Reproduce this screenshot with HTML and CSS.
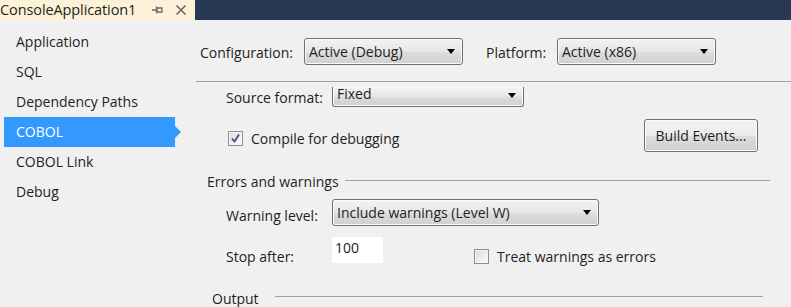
FILE: index.html
```html
<!DOCTYPE html>
<html>
<head>
<meta charset="utf-8">
<link rel="stylesheet" href="styles.css">
</head>
<body>
<div class="window">
  <div class="tabbar">
    <div class="tab">
      <span class="tab-title">ConsoleApplication1</span>
      <svg class="pin" width="11" height="10" viewBox="0 0 11 10"><path d="M0 5h4M4.5 1.5v7M5 3h5v4H5z" fill="none" stroke="#6a6a6a" stroke-width="1.3"/></svg>
      <svg class="close" width="12" height="12" viewBox="0 0 12 12"><path d="M1.5 1.5l9 9M10.5 1.5l-9 9" stroke="#6a6a6a" stroke-width="1.6"/></svg>
    </div>
    <div class="tabfill"></div>
  </div>
  <div class="main">
    <ul class="nav">
      <li>Application</li>
      <li>SQL</li>
      <li>Dependency Paths</li>
      <li class="active">COBOL</li>
      <li>COBOL Link</li>
      <li>Debug</li>
    </ul>
    <div class="content">
      <div class="configbar">
        <span class="lbl cfg-lbl">Configuration:</span>
        <div class="combo combo-cfg"><span>Active (Debug)</span><i class="arrow"></i></div>
        <span class="lbl plat-lbl">Platform:</span>
        <div class="combo combo-cfg"><span>Active (x86)</span><i class="arrow"></i></div>
      </div>
      <div class="scroll">
        <div class="row form-row src-row">
          <span class="lbl">Source format:</span>
          <div class="combo combo-src"><span>Fixed</span><i class="arrow"></i></div>
        </div>
        <div class="row check-row">
          <label class="check"><span class="box checked"><svg width="11" height="11" viewBox="0 0 11 11"><path d="M2 5.5l2.5 3L9 1.5" fill="none" stroke="#3b4f7a" stroke-width="1.8"/></svg></span>Compile for debugging</label>
          <button class="btn">Build Events...</button>
        </div>
        <div class="group group-errors"><span>Errors and warnings</span><hr></div>
        <div class="row form-row warn-row">
          <span class="lbl">Warning level:</span>
          <div class="combo combo-warn"><span>Include warnings (Level W)</span><i class="arrow"></i></div>
        </div>
        <div class="row form-row stop-row">
          <span class="lbl">Stop after:</span>
          <div class="textbox">100</div>
          <label class="check treat"><span class="box"></span>Treat warnings as errors</label>
        </div>
        <div class="group group-output"><span>Output</span><hr></div>
      </div>
    </div>
  </div>
</div>
</body>
</html>
```
FILE: styles.css
```css
* { box-sizing: border-box; }
html, body { margin: 0; padding: 0; }
body {
  width: 791px;
  height: 307px;
  overflow: hidden;
  background: #f0f0f0;
  font-family: "Open Sans", "Noto Sans", sans-serif;
  font-size: 14px;
  color: #1e1e1e;
}
.window { width: 791px; height: 307px; display: flex; flex-direction: column; }
.tabbar { display: flex; height: 20px; }
.tab {
  width: 195px;
  background: #fdf2d8;
  display: flex;
  align-items: center;
}
.tab-title { font-size: 14.5px; width: 152px; line-height: 20px; letter-spacing: -0.1px; }
.pin { margin-left: 0; }
.close { margin-left: 12px; }
.tabfill { flex: 1; background: #293955; }

.main { flex: 1; display: flex; }
.nav {
  list-style: none;
  margin: 0;
  padding: 7px 0 0 4px;
  width: 196px;
  flex: none;
}
.nav li {
  height: 30px;
  line-height: 30px;
  padding-left: 12px;
  width: 171px;
  position: relative;
}
.nav li.active { background: #3399ff; color: #fff; }
.nav li.active::after {
  content: "";
  position: absolute;
  right: -6px;
  top: 9px;
  border-left: 6px solid #3399ff;
  border-top: 6px solid transparent;
  border-bottom: 6px solid transparent;
}

.content { flex: 1; display: flex; flex-direction: column; }
.configbar {
  height: 62px;
  border-bottom: 1px solid #a0a0a0;
  display: flex;
  align-items: flex-start;
  padding: 18px 0 0 4px;
}
.configbar .lbl { line-height: 27px; padding-top: 1px; }
.cfg-lbl { width: 104px; }
.plat-lbl { width: 71px; margin-left: 23px; }

.combo {
  height: 27px;
  border: 1px solid #707070;
  border-radius: 3px;
  background: linear-gradient(#f3f3f3, #e6e6e6 50%, #dddddd 51%, #d0d0d0);
  display: flex;
  align-items: center;
  padding-left: 4px;
  padding-right: 7px;
  justify-content: space-between;
  box-shadow: inset 0 0 0 1px #fbfbfb;
}
.combo-cfg { width: 159px; }
.arrow {
  width: 0; height: 0;
  border-top: 5px solid #000;
  border-left: 4.5px solid transparent;
  border-right: 4.5px solid transparent;
}

.scroll { padding-left: 30px; position: relative; }
.row { display: flex; align-items: center; }
.form-row .lbl { width: 106px; flex: none; }
.src-row { margin-top: 5px; height: 20px; }
.combo-src {
  width: 192px;
  height: 20px;
  border-top: none;
  border-radius: 0 0 3px 3px;
  align-items: flex-start;
  line-height: 14px;
}
.combo-src .arrow { margin-top: 6px; }

.check-row { margin-top: 12px; height: 33px; }
.check { display: flex; align-items: center; }
.check-row .check { margin-left: 2px; margin-top: 5px; }
.box {
  width: 15px; height: 15px;
  border: 1px solid #8e8f8f;
  background: linear-gradient(135deg, #dcdcdc, #fbfbfb);
  margin-right: 8px;
  display: flex; align-items: center; justify-content: center;
  box-shadow: inset 0 0 0 1px #f4f4f4;
}
.btn {
  margin-left: auto;
  margin-right: 33px;
  width: 114px;
  height: 33px;
  border: 1px solid #707070;
  border-radius: 3px;
  background: linear-gradient(#f2f2f2, #ebebeb 50%, #dddddd 51%, #cfcfcf);
  font: inherit;
  color: #1e1e1e;
  box-shadow: inset 0 0 0 1px #fcfcfc;
  padding: 0;
}

.group { display: flex; align-items: center; }
.group hr { flex: 1; border: none; border-top: 1px solid #a0a0a0; margin: 0; }
.group-errors { margin-left: -19px; margin-top: 19px; height: 20px; margin-right: 21px; }
.group-errors hr { margin-left: 6px; margin-top: -2px; }
.warn-row { margin-top: 8px; height: 27px; }
.warn-row .lbl { padding-top: 5px; }
.combo-warn { width: 267px; }
.stop-row { margin-top: 11px; height: 26px; }
.stop-row .lbl { padding-top: 12px; }
.textbox {
  width: 51px; height: 26px;
  background: #fff;
  padding: 3px 0 0 3px;
  line-height: 16px;
}
.treat { margin-left: 91px; margin-top: 12px; }
.group-output { margin-left: -14px; margin-top: 25px; height: 20px; margin-right: 28px; }
.group-output hr { margin-left: 16px; margin-top: -4px; }
```
